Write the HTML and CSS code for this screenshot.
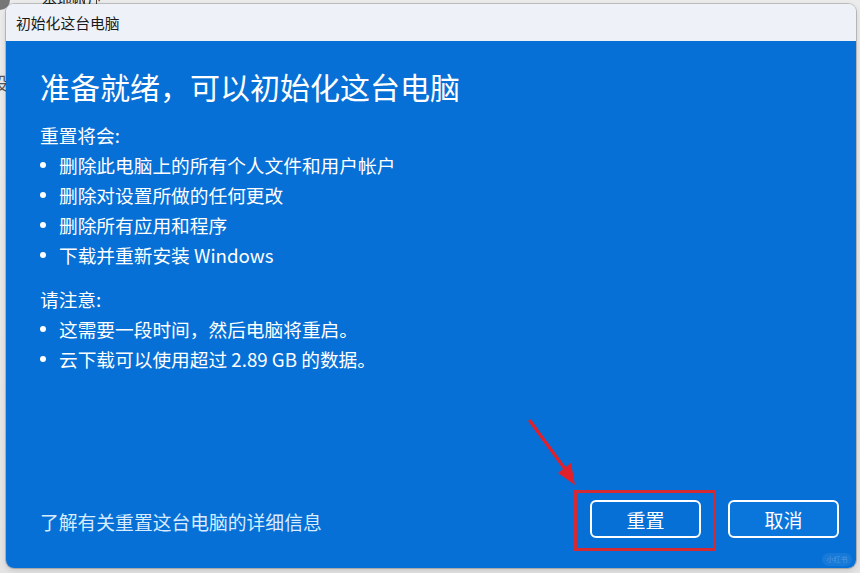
FILE: index.html
```html
<!DOCTYPE html>
<html lang="zh-CN">
<head>
<meta charset="utf-8">
<title>初始化这台电脑</title>
<link rel="stylesheet" href="styles.css">
</head>
<body>
<div class="desktop">
  <div class="backdrop">
    <span class="bd-top">本地帐户</span>
    <span class="bd-box"></span>
    <span class="bd-left">设</span>
    <span class="bd-corner"></span>
  </div>
  <div class="window">
    <div class="titlebar">初始化这台电脑</div>
    <div class="content">
      <h1 class="heading">准备就绪，可以初始化这台电脑</h1>
      <p class="section-title">重置将会:</p>
      <ul class="bullets">
        <li>删除此电脑上的所有个人文件和用户帐户</li>
        <li>删除对设置所做的任何更改</li>
        <li>删除所有应用和程序</li>
        <li>下载并重新安装 Windows</li>
      </ul>
      <p class="section-title second">请注意:</p>
      <ul class="bullets">
        <li>这需要一段时间，然后电脑将重启。</li>
        <li>云下载可以使用超过 2.89 GB 的数据。</li>
      </ul>
      <div class="footer">
        <span class="link">了解有关重置这台电脑的详细信息</span>
        <div class="buttons">
          <button class="btn primary">重置</button>
          <button class="btn">取消</button>
        </div>
      </div>
    </div>
  </div>
  <div class="highlight"></div>
  <svg class="arrow" width="70" height="80" viewBox="0 0 70 80">
    <line x1="6" y1="4" x2="44" y2="56" stroke="#e0202b" stroke-width="3.2" stroke-linecap="round"/>
    <polygon points="51,68 34,56 47,46" fill="#e0202b"/>
  </svg>
  <div class="watermark">小红书</div>
</div>
</body>
</html>
```
FILE: styles.css
```css
* { box-sizing: border-box; }
html, body { margin: 0; padding: 0; }
body {
  width: 860px;
  height: 573px;
  overflow: hidden;
  background: #e6e6e6;
  font-family: "Noto Sans CJK SC", "Noto Sans", sans-serif;
}
.desktop {
  position: relative;
  width: 860px;
  height: 573px;
  padding: 4px 0 0 6px;
  background: linear-gradient(#ececec, #e4e4e4);
}
.backdrop span { position: absolute; }
.bd-top {
  left: 42px;
  top: -12px;
  font-size: 15px;
  color: #222;
}
.bd-box {
  left: 84px;
  top: -8px;
  width: 13px;
  height: 13px;
  border: 1.5px solid #444;
}
.bd-left {
  left: -9px;
  top: 70px;
  font-size: 17px;
  color: #555;
}
.bd-corner {
  left: -10px;
  top: -10px;
  width: 20px;
  height: 20px;
  border-radius: 50%;
  background: #777;
}
.window {
  position: relative;
  width: 850px;
  height: 564px;
  border-radius: 8px;
  overflow: hidden;
  display: flex;
  flex-direction: column;
  box-shadow: 0 0 0 1px rgba(0,0,0,0.18), 0 2px 6px rgba(0,0,0,0.15);
}
.titlebar {
  height: 37px;
  flex: none;
  background: #eef2f8;
  color: #1a1a1a;
  font-size: 14.8px;
  display: flex;
  align-items: center;
  padding-left: 10px;
  padding-bottom: 1px;
}
.content {
  flex: 1;
  background: #0670d6;
  color: #ffffff;
  padding: 25px 17px 30px 34px;
  display: flex;
  flex-direction: column;
}
.heading {
  margin: 0;
  font-size: 30px;
  font-weight: 400;
  line-height: 40px;
}
.section-title {
  margin: 14px 0 0;
  font-size: 18.7px;
  line-height: 30px;
}
.bullets {
  list-style: none;
  margin: 0;
  padding: 0;
  font-size: 18.7px;
  line-height: 30px;
}
.bullets li {
  display: flex;
  align-items: center;
}
.bullets li::before {
  content: "";
  width: 6px;
  height: 6px;
  border-radius: 50%;
  background: #ffffff;
  margin: 0 13px 0 0;
  flex: none;
}
.footer {
  margin-top: auto;
  display: flex;
  align-items: center;
  justify-content: space-between;
}
.link {
  font-size: 18.8px;
  color: #d8ecff;
  padding-top: 5px;
}
.buttons {
  display: flex;
  gap: 27px;
}
.btn {
  width: 111px;
  height: 38px;
  border: 2.5px solid #ffffff;
  border-radius: 6px;
  background: transparent;
  color: #ffffff;
  font-family: "Noto Sans CJK SC", "Noto Sans", sans-serif;
  font-size: 19px;
  padding: 0;
  line-height: 1;
}
.btn + .btn { background: #0a76db; }
.highlight {
  position: absolute;
  left: 574px;
  top: 490px;
  width: 142px;
  height: 61px;
  border: 3px solid #d42a34;
}
.arrow {
  position: absolute;
  left: 524px;
  top: 417px;
}
.watermark {
  position: absolute;
  left: 822px;
  top: 553px;
  width: 30px;
  height: 13px;
  border-radius: 7px;
  background: rgba(255,255,255,0.07);
  color: rgba(255,255,255,0.25);
  font-size: 7px;
  line-height: 13px;
  text-align: center;
}
```
